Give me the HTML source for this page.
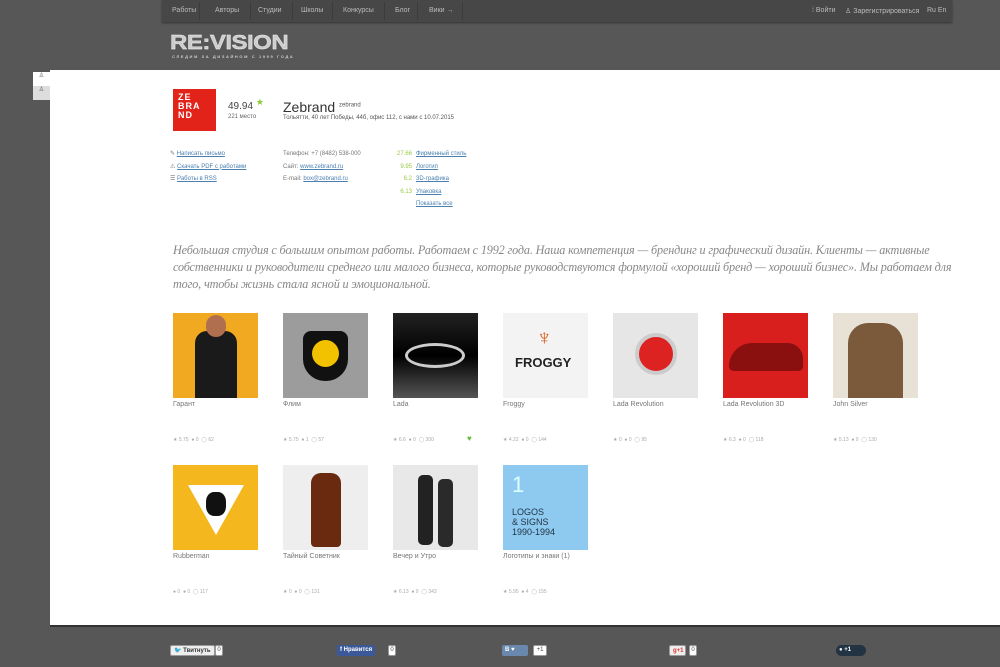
<!DOCTYPE html>
<html><head><meta charset="utf-8"><style>
*{margin:0;padding:0;box-sizing:border-box}
body{width:1000px;height:667px;background:#575757;font-family:"Liberation Sans",sans-serif;position:relative;overflow:hidden}
.a{position:absolute}
.nav{left:162px;top:0;width:790px;height:22px;background:#474747;box-shadow:0 1px 2px #333}
.nav span{position:absolute;top:7px;font-size:7px;color:#bbb}
.sep{position:absolute;top:2px;width:1px;height:18px;background:#3c3c3c}
.main{left:50px;top:70px;width:950px;height:557px;background:#fff;border-bottom:2px solid #333}
.lk{font-size:6px;color:#4a7fb0;text-decoration:underline}
.g{font-size:6px;color:#777}
.th{width:85px;height:85px;position:absolute}
.cap{position:absolute;font-size:7px;color:#777}
.st{position:absolute;font-size:5px;color:#aaa}
.btn{position:absolute;top:645px;height:11px;font-size:6px;color:#fff;font-weight:bold;line-height:11px;padding:0 3px;border-radius:2px}
.cnt{position:absolute;top:645px;height:11px;width:8px;background:#fff;border:1px solid #999;font-size:6px;line-height:9px;text-align:center;color:#444;border-radius:2px}
</style></head><body>
<div class="a nav">
<span style="left:10px">Работы</span><div class="sep" style="left:37px"></div>
<span style="left:53px">Авторы</span><div class="sep" style="left:88px"></div>
<span style="left:96px">Студии</span><div class="sep" style="left:130px"></div>
<span style="left:139px">Школы</span><div class="sep" style="left:170px"></div>
<span style="left:181px">Конкурсы</span><div class="sep" style="left:222px"></div>
<span style="left:233px">Блог</span><div class="sep" style="left:255px"></div>
<span style="left:267px">Вики →</span><div class="sep" style="left:300px"></div>
<span style="left:650px">⁞ Войти</span>
<span style="left:683px">♙ Зарегистрироваться</span>
<span style="left:765px">Ru En</span>
</div>
<div class="a" style="left:170px;top:31px;font:bold 24px 'Liberation Sans',sans-serif;color:#ccc;letter-spacing:-0.5px;transform:scaleY(0.85);transform-origin:top left;text-shadow:0 1px 0 #888;-webkit-text-stroke:0.5px #eee">RE:VISION</div>
<div class="a" style="left:172px;top:54px;font-size:4px;font-weight:bold;color:#ccc;letter-spacing:1.6px">СЛЕДИМ ЗА ДИЗАЙНОМ С 1999 ГОДА</div>
<div class="a" style="left:33px;top:72px;width:17px;height:14px;background:#fff;font-size:6px;text-align:center;color:#555">♙</div>
<div class="a" style="left:33px;top:86px;width:17px;height:14px;background:#ddd;font-size:6px;text-align:center;color:#555">♙</div>
<div class="a main"></div>
<div class="a" style="left:173px;top:89px;width:43px;height:42px;background:#e2231a;color:#fff;font:bold 9px/9px 'Liberation Sans',sans-serif;padding:4px 0 0 5px;letter-spacing:1px">ZE<br>BRA<br>ND</div>
<div class="a" style="left:228px;top:101px;font-size:10px;color:#444">49.94 <span style="color:#8c3;font-size:9px;position:relative;top:-4px">★</span></div>
<div class="a" style="left:228px;top:114px;font-size:6px;color:#666">221 место</div>
<div class="a" style="left:283px;top:99px;font-size:14px;color:#333">Zebrand <sup style="font-size:6px;color:#555">zebrand</sup></div>
<div class="a" style="left:283px;top:115px;font-size:6px;color:#555">Тольятти, 40 лет Победы, 44б, офис 112, с нами с 10.07.2015</div>
<div class="a" style="left:170px;top:148px;line-height:12.5px"><div class="g">✎ <span class="lk">Написать письмо</span></div><div class="g">⚠ <span class="lk">Скачать PDF с работами</span></div><div class="g">☰ <span class="lk">Работы в RSS</span></div></div>
<div class="a" style="left:283px;top:148px;line-height:12.5px"><div class="g">Телефон: +7 (8482) 538-000</div><div class="g">Сайт: <span class="lk">www.zebrand.ru</span></div><div class="g">E-mail: <span class="lk">box@zebrand.ru</span></div></div>
<div class="a" style="left:390px;top:148px;line-height:12.5px;width:22px;text-align:right;font-size:6px;color:#9c4"><div>27.66</div><div>9.95</div><div>6.2</div><div>6.13</div></div>
<div class="a" style="left:416px;top:148px;line-height:12.5px"><div class="lk">Фирменный стиль</div><div class="lk">Логотип</div><div class="lk">3D-графика</div><div class="lk">Упаковка</div><div class="lk">Показать все</div></div>
<div class="a" style="left:173px;top:242px;width:785px;font:italic 12.2px/17px 'Liberation Serif',serif;color:#888;letter-spacing:-0.15px">Небольшая студия с большим опытом работы. Работаем с 1992 года. Наша компетенция — брендинг и графический дизайн. Клиенты — активные собственники и руководители среднего или малого бизнеса, которые руководствуются формулой «хороший бренд — хороший бизнес». Мы работаем для того, чтобы жизнь стала ясной и эмоциональной.</div>

<div class="th" style="left:173px;top:313px;background:#f2a922"><div class="a" style="left:22px;top:18px;width:42px;height:67px;background:#1a1a1a;border-radius:12px 12px 0 0"></div><div class="a" style="left:33px;top:2px;width:20px;height:22px;background:#b07050;border-radius:10px"></div></div>
<div class="th" style="left:283px;top:313px;background:#9c9c9c"><div class="a" style="left:20px;top:18px;width:45px;height:50px;background:#111;border-radius:8px 8px 22px 22px"></div><div class="a" style="left:29px;top:27px;width:27px;height:27px;background:#f2c200;border-radius:50%"></div></div>
<div class="th" style="left:393px;top:313px;background:linear-gradient(#222,#000 50%,#555)"><div class="a" style="left:12px;top:30px;width:60px;height:25px;border:3px solid #ccc;border-radius:50%"></div></div>
<div class="th" style="left:503px;top:313px;background:#f3f3f3"><div class="a" style="left:33px;top:12px;color:#e05a16;font-size:22px">♆</div><div class="a" style="left:12px;top:42px;font:bold 13px 'Liberation Sans';color:#222">FROGGY</div></div>
<div class="th" style="left:613px;top:313px;background:#e6e6e6"><div class="a" style="left:22px;top:20px;width:42px;height:42px;border-radius:50%;background:#d22;border:4px solid #ccc"></div></div>
<div class="th" style="left:723px;top:313px;background:#d91e1e"><div class="a" style="left:6px;top:30px;width:74px;height:28px;background:#8a1010;border-radius:30px 20px 6px 6px"></div></div>
<div class="th" style="left:833px;top:313px;background:#e8e2d6"><div class="a" style="left:15px;top:10px;width:55px;height:75px;background:#7a5a3a;border-radius:20px 20px 0 0"></div></div>
<div class="cap" style="left:173px;top:401px">Гарант</div><div class="cap" style="left:283px;top:401px">Флим</div><div class="cap" style="left:393px;top:401px">Lada</div><div class="cap" style="left:503px;top:401px">Froggy</div><div class="cap" style="left:613px;top:401px">Lada Revolution</div><div class="cap" style="left:723px;top:401px">Lada Revolution 3D</div><div class="cap" style="left:833px;top:401px">John Silver</div>
<div class="st" style="left:173px;top:437px">★ 5.75 &nbsp;● 0 &nbsp;◯ 62</div><div class="st" style="left:283px;top:437px">★ 5.75 &nbsp;● 1 &nbsp;◯ 57</div><div class="st" style="left:393px;top:437px">★ 6.6 &nbsp;● 0 &nbsp;◯ 300</div><div class="a" style="left:467px;top:434px;color:#6b3;font-size:8px">♥</div><div class="st" style="left:503px;top:437px">★ 4.22 &nbsp;● 0 &nbsp;◯ 144</div><div class="st" style="left:613px;top:437px">★ 0 &nbsp;● 0 &nbsp;◯ 95</div><div class="st" style="left:723px;top:437px">★ 6.3 &nbsp;● 0 &nbsp;◯ 118</div><div class="st" style="left:833px;top:437px">★ 5.13 &nbsp;● 0 &nbsp;◯ 130</div>

<div class="th" style="left:173px;top:465px;background:#f4b81e"><div class="a" style="left:15px;top:20px;width:0;height:0;border-left:28px solid transparent;border-right:28px solid transparent;border-top:50px solid #fff"></div><div class="a" style="left:33px;top:27px;width:20px;height:24px;background:#111;border-radius:40%"></div></div>
<div class="th" style="left:283px;top:465px;background:#eee"><div class="a" style="left:28px;top:8px;width:30px;height:74px;background:#6a2a10;border-radius:10px 10px 4px 4px"></div></div>
<div class="th" style="left:393px;top:465px;background:#e8e8e8"><div class="a" style="left:25px;top:10px;width:15px;height:70px;background:#222;border-radius:5px"></div><div class="a" style="left:45px;top:14px;width:15px;height:68px;background:#2a2a2a;border-radius:5px"></div></div>
<div class="th" style="left:503px;top:465px;background:#8ecaf0;color:#fff"><div class="a" style="left:9px;top:7px;font-size:22px;color:#dff">1</div><div class="a" style="left:9px;top:42px;font-size:9px;line-height:10px;color:#234">LOGOS<br>&amp; SIGNS<br>1990-1994</div></div>
<div class="cap" style="left:173px;top:553px">Rubberman</div><div class="cap" style="left:283px;top:553px">Тайный Советник</div><div class="cap" style="left:393px;top:553px">Вечер и Утро</div><div class="cap" style="left:503px;top:553px">Логотипы и знаки (1)</div>
<div class="st" style="left:173px;top:589px">● 0 &nbsp;● 0 &nbsp;◯ 117</div><div class="st" style="left:283px;top:589px">★ 0 &nbsp;● 0 &nbsp;◯ 131</div><div class="st" style="left:393px;top:589px">★ 6.13 &nbsp;● 0 &nbsp;◯ 343</div><div class="st" style="left:503px;top:589px">★ 5.95 &nbsp;● 4 &nbsp;◯ 155</div>

<div class="btn" style="left:170px;background:#eee;color:#333;border:1px solid #999">🐦 Твитнуть</div><div class="cnt" style="left:215px">0</div>
<div class="btn" style="left:337px;background:#3b5998">f Нравится</div><div class="cnt" style="left:388px">0</div>
<div class="btn" style="left:502px;width:26px;background:#6a88ad">В ♥</div><div class="cnt" style="left:533px;width:14px">+1</div>
<div class="btn" style="left:669px;width:17px;background:#eee;color:#d33;border:1px solid #999">g+1</div><div class="cnt" style="left:689px">0</div>
<div class="btn" style="left:836px;width:30px;background:#234;border-radius:6px">● +1</div>
</body></html>
